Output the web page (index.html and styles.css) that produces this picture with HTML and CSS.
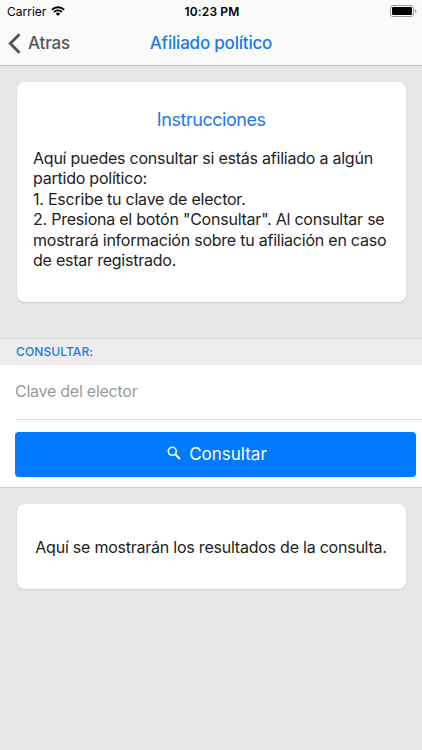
FILE: index.html
```html
<!DOCTYPE html>
<html lang="es">
<head>
    <meta charset="UTF-8">
    <meta name="viewport" content="width=device-width, initial-scale=1.0">
    <title>Afiliado político</title>
    <link rel="stylesheet" href="styles.css">
</head>
<body>
    <header class="header">
        <div class="status-bar">
            <div class="carrier">
                <span>Carrier</span>
                <svg class="wifi" viewBox="0 0 14 10" width="14" height="10">
                    <path d="M0.9 3.7a8.8 8.8 0 0 1 12.2 0" fill="none" stroke="#000" stroke-width="1.9"/>
                    <path d="M3.1 6a5.6 5.6 0 0 1 7.8 0" fill="none" stroke="#000" stroke-width="1.8"/>
                    <path d="M4.7 7.7a3.3 3.3 0 0 1 4.6 0L7 10z"/>
                </svg>
            </div>
            <div class="time">10:23 PM</div>
            <svg class="battery" viewBox="0 0 27 12" width="27" height="12">
                <rect x="0.5" y="0.5" width="23" height="11" rx="2.5" fill="none" stroke="#999"/>
                <rect x="2" y="2" width="20" height="8" rx="1.2"/>
                <path d="M25 4q1.5 0.5 1.5 2t-1.5 2z" fill="#999"/>
            </svg>
        </div>
        <div class="toolbar">
            <button class="back">
                <svg viewBox="0 0 13 21" width="13" height="21">
                    <path d="M11.5 1.2L2.3 10.5l9.2 9.3" fill="none" stroke="#555" stroke-width="2.9"/>
                </svg>
                <span>Atras</span>
            </button>
            <h1 class="title">Afiliado político</h1>
        </div>
    </header>

    <main>
        <section class="card instructions">
            <h2>Instrucciones</h2>
            <p>
                Aquí puedes consultar si estás afiliado a algún<br>
                partido político:<br>
                1. Escribe tu clave de elector.<br>
                2. Presiona el botón "Consultar". Al consultar se<br>
                mostrará información sobre tu afiliación en caso<br>
                de estar registrado.
            </p>
        </section>

        <form class="form">
            <div class="divider">CONSULTAR:</div>
            <div class="item">
                <input type="text" placeholder="Clave del elector">
            </div>
            <button class="submit" type="button">
                <svg viewBox="0 0 14 14" width="14" height="14">
                    <circle cx="5.3" cy="5.3" r="4" fill="none" stroke="#fff" stroke-width="1.6"/>
                    <path d="M8 8l5 5" stroke="#fff" stroke-width="1.9"/>
                </svg>
                <span>Consultar</span>
            </button>
        </form>

        <section class="card results">
            <p>Aquí se mostrarán los resultados de la consulta.</p>
        </section>
    </main>
</body>
</html>
```

FILE: styles.css
```css
* {
    box-sizing: border-box;
}

body {
    margin: 0;
    min-height: 750px;
    background: #e7e7e7;
    color: #222;
    font-family: Inter, "Liberation Sans", sans-serif;
    font-size: 16px;
}

h1, h2, p {
    margin: 0;
    font-weight: 400;
}

button {
    border: none;
    padding: 0;
    font-family: inherit;
    cursor: pointer;
}

.header {
    height: 66px;
    background: #fafafa;
    border-bottom: 1px solid #c4c4c4;
}

.status-bar {
    display: grid;
    grid-template-columns: 1fr auto 1fr;
    align-items: center;
    height: 22px;
    padding: 0 5px 0 7px;
    color: #000;
    font-size: 12px;
}

.carrier {
    display: flex;
    align-items: center;
    gap: 5px;
}

.time {
    font-weight: 600;
    letter-spacing: 0.15px;
}

.battery {
    justify-self: end;
}

.toolbar {
    display: grid;
    grid-template-columns: 1fr auto 1fr;
    align-items: center;
    height: 42px;
    padding: 0 8px;
}

.back {
    display: flex;
    align-items: center;
    gap: 7px;
    background: none;
    color: #555;
    font-size: 17px;
    font-weight: 500;
    letter-spacing: -0.15px;
}

.title {
    color: #1a7bea;
    font-size: 17px;
    font-weight: 500;
    letter-spacing: -0.2px;
}

.card {
    margin: 16px 16.5px 0;
    background: #fff;
    border-radius: 8px;
    box-shadow: 0 1px 2px rgba(0, 0, 0, 0.12);
}

.instructions {
    height: 220px;
    padding: 27px 16px 0 16.5px;
}

.instructions h2 {
    margin-bottom: 17px;
    color: #1a7bea;
    font-size: 18px;
    letter-spacing: -0.45px;
    line-height: 22px;
    text-align: center;
}

.instructions p {
    letter-spacing: -0.23px;
    line-height: 20.4px;
    white-space: nowrap;
}

.form {
    height: 150px;
    margin-top: 36px;
    background: #fff;
    border-top: 1px solid #dedede;
    border-bottom: 1px solid #cbcbcb;
}

.divider {
    height: 26px;
    padding-left: 16px;
    background: #ededed;
    color: #1a7bea;
    font-size: 12px;
    font-weight: 500;
    letter-spacing: 0.1px;
    line-height: 26px;
}

.item {
    height: 55px;
    margin-left: 15px;
    border-bottom: 1px solid #dedede;
}

.item input {
    display: block;
    width: 100%;
    height: 52px;
    border: none;
    padding: 0;
    outline: none;
    font-family: inherit;
    font-size: 16px;
    letter-spacing: -0.25px;
}

.item input::placeholder {
    color: #999;
}

.submit {
    display: flex;
    align-items: center;
    justify-content: center;
    gap: 8px;
    width: 401px;
    height: 45px;
    margin: 11.5px 0 0 14.5px;
    padding: 0 0 0 4px;
    border-radius: 4px;
    background: #007aff;
    color: #fff;
    font-size: 17px;
}

.submit svg {
    margin-bottom: 2px;
}

.results {
    height: 85px;
    letter-spacing: -0.23px;
    line-height: 86px;
    text-align: center;
    white-space: nowrap;
}
```
